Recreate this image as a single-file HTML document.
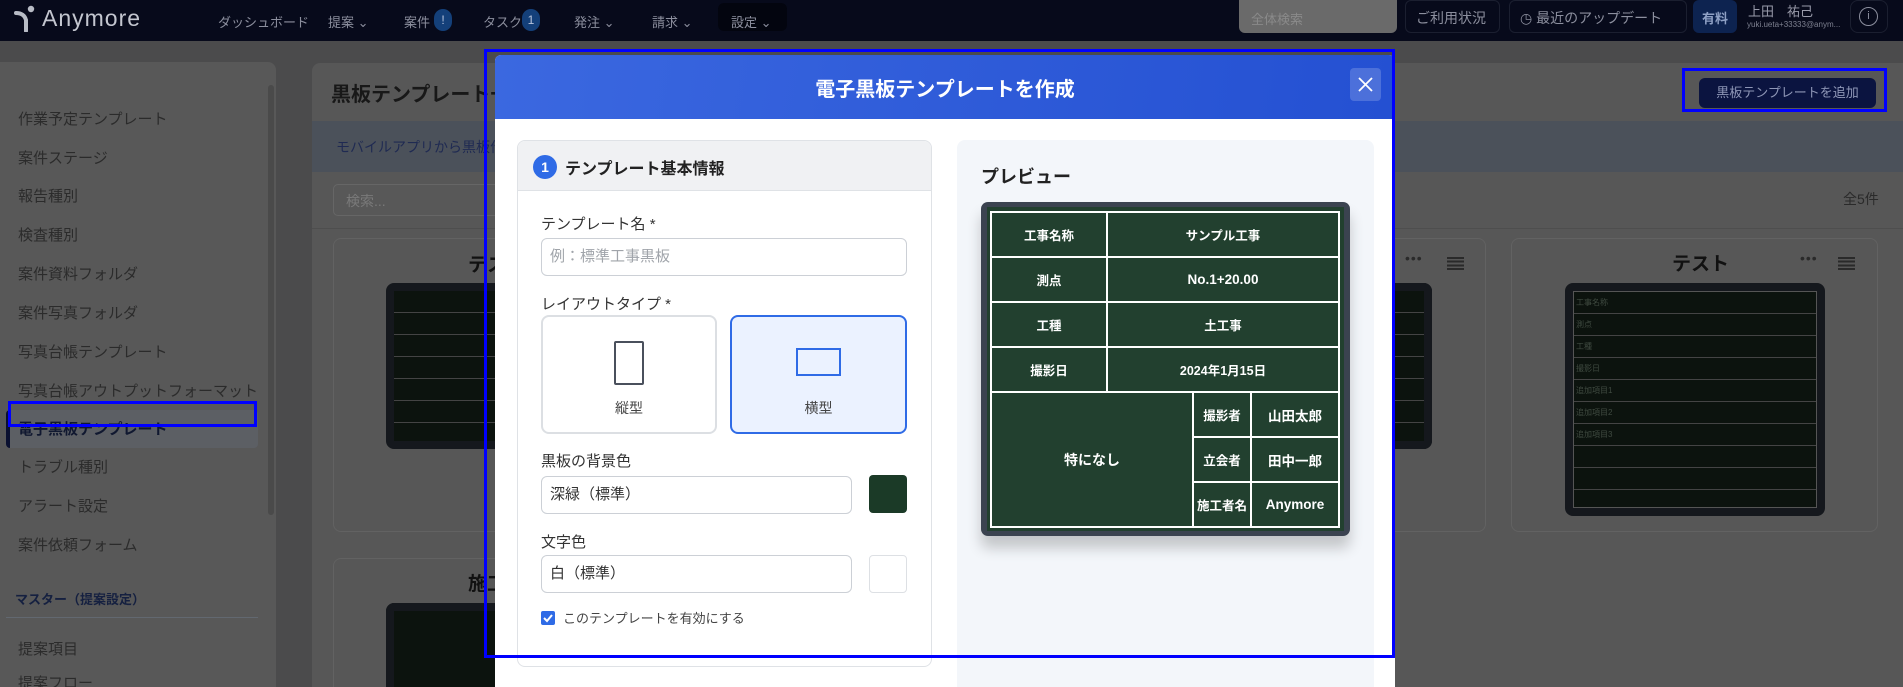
<!DOCTYPE html>
<html style="width:1903px;height:687px;overflow:hidden;background:#4b4b4c"><head><meta charset="utf-8">
<style>
*{margin:0;padding:0;box-sizing:border-box;white-space:nowrap}
body{width:1903px;height:687px;overflow:hidden;background:#4b4b4c;font-family:"Liberation Sans","Noto Sans CJK JP",sans-serif;position:relative}
.a{position:absolute}
.nav{left:0;top:0;width:1903px;height:41px;background:#070a1b}
.nv{color:#8c8f9e;font-size:13px;top:12px}
.badge{background:#14407a;color:#b8c4dc;border-radius:10px;font-size:12px;text-align:center;height:22px;line-height:22px;top:9px;width:18px}
.side{left:0;top:62px;width:276px;height:625px;background:#585858;border-radius:0 8px 0 0}
.si{left:18px;font-size:15px;color:#2b2b2b}
.main{left:312px;top:63px;width:1591px;height:624px;background:#575757;border-radius:8px 0 0 0}
.bb{background:#0c130e;border:8px solid #15181d;border-radius:8px}
.grid{background:repeating-linear-gradient(to bottom,transparent 0,transparent 21px,#444 21px,#444 22px),#0c130e}
.box{border:3px solid #0000ff}
.modal{left:495px;top:55px;width:900px;height:632px;background:#fff;border-radius:6px 6px 0 0;overflow:hidden}
.mh{left:0;top:0;width:900px;height:64px;background:linear-gradient(100deg,#3b68e0,#2450d2)}
.lbl{font-size:15px;color:#333}
.inp{border:1px solid #ccd0d6;border-radius:6px;height:38px;font-size:15px;line-height:36px;padding-left:8px;color:#333;background:#fff}
table.bd{border-collapse:collapse;width:350px}
table.bd td{border:2px solid #fff;color:#fff;font-weight:bold;font-size:12.5px;text-align:center;height:45px;padding:0}
.ham{width:17px;height:13px;background:repeating-linear-gradient(to bottom,#2a2a2a 0,#2a2a2a 2px,transparent 2px,transparent 3.7px)}
</style></head><body>

<div class="a nav"></div>
<svg class="a" style="left:12px;top:4px" width="26" height="28" viewBox="0 0 26 28"><circle cx="19" cy="5" r="3.2" fill="#b8bcc6"/><path d="M4 9 Q12 9 14 16 L14 27" stroke="#b8bcc6" stroke-width="4" fill="none" stroke-linecap="round"/></svg>
<div class="a" style="left:42px;top:5px;font-size:23px;color:#c3c6cf;letter-spacing:1px">Anymore</div>
<div class="a nv" style="left:218px">ダッシュボード</div>
<div class="a nv" style="left:328px">提案 ⌄</div>
<div class="a nv" style="left:404px">案件</div><div class="a badge" style="left:434px">!</div>
<div class="a nv" style="left:483px">タスク</div><div class="a badge" style="left:522px">1</div>
<div class="a nv" style="left:574px">発注 ⌄</div>
<div class="a nv" style="left:652px">請求 ⌄</div>
<div class="a" style="left:718px;top:3px;width:69px;height:28px;background:#03050f;border-radius:6px"></div>
<div class="a nv" style="left:731px">設定 ⌄</div>
<div class="a" style="left:1239px;top:0;width:158px;height:33px;background:#6a6a6a;border-radius:0 0 6px 6px;color:#8a8a8a;font-size:13px;padding:9px 12px">全体検索</div>
<div class="a" style="left:1405px;top:0;width:95px;height:33px;border:1px solid #1b1f30;border-radius:6px;color:#8c8f9e;font-size:14px;padding:7px 10px">ご利用状況</div>
<div class="a" style="left:1509px;top:0;width:178px;height:33px;border:1px solid #1b1f30;border-radius:6px;color:#8c8f9e;font-size:14px;padding:7px 10px">◷ 最近のアップデート</div>
<div class="a" style="left:1693px;top:0;width:44px;height:33px;background:#0d2350;border-radius:6px;color:#8ea0c4;font-size:13px;font-weight:bold;padding:8px 9px">有料</div>
<div class="a" style="left:1748px;top:1px;color:#9a9cab;font-size:13px">上田　祐己</div>
<div class="a" style="left:1747px;top:20px;color:#7d8090;font-size:8px">yuki.ueta+33333@anym...</div>
<div class="a" style="left:1850px;top:0;width:38px;height:33px;border:1px solid #1b1f30;border-radius:8px"></div>
<div class="a" style="left:1859px;top:7px;width:19px;height:19px;border:1.5px solid #8c8f9e;border-radius:50%;color:#8c8f9e;font-size:11px;text-align:center;line-height:16px">i</div>

<div class="a side"></div>
<div class="a" style="left:268px;top:85px;width:6px;height:430px;background:#4a4a4a;border-radius:3px"></div>
<div class="a si" style="top:108px">作業予定テンプレート</div>
<div class="a si" style="top:147px">案件ステージ</div>
<div class="a si" style="top:185px">報告種別</div>
<div class="a si" style="top:224px">検査種別</div>
<div class="a si" style="top:263px">案件資料フォルダ</div>
<div class="a si" style="top:302px">案件写真フォルダ</div>
<div class="a si" style="top:341px">写真台帳テンプレート</div>
<div class="a si" style="top:380px">写真台帳アウトプットフォーマット</div>
<div class="a" style="left:6px;top:410px;width:252px;height:38px;background:#5c5f64;border-radius:4px;border-left:4px solid #0a1030"></div>
<div class="a si" style="top:418px;font-weight:bold;color:#101830">電子黒板テンプレート</div>
<div class="a si" style="top:456px">トラブル種別</div>
<div class="a si" style="top:495px">アラート設定</div>
<div class="a si" style="top:534px">案件依頼フォーム</div>
<div class="a" style="left:15px;top:589px;font-size:13px;font-weight:bold;color:#152040">マスター（提案設定）</div>
<div class="a" style="left:6px;top:617px;width:252px;height:1px;background:#626870"></div>
<div class="a si" style="top:638px">提案項目</div>
<div class="a si" style="top:672px">提案フロー</div>
<div class="a box" style="left:8px;top:401px;width:249px;height:26px"></div>

<div class="a main"></div>
<div class="a" style="left:331px;top:78px;font-size:20px;font-weight:bold;color:#181818">黒板テンプレート一覧</div>
<div class="a" style="left:312px;top:121px;width:1591px;height:51px;background:#4b515a"></div>
<div class="a" style="left:336px;top:137px;font-size:14px;color:#1f2a52">モバイルアプリから黒板作成...</div>
<div class="a" style="left:333px;top:184px;width:300px;height:32px;border:1px solid #666;border-radius:5px;background:#585858;color:#7a7a7a;font-size:14px;padding:6px 12px">検索...</div>
<div class="a" style="left:312px;top:228px;width:1591px;height:1px;background:#4e4e4e"></div>
<div class="a" style="left:1843px;top:189px;font-size:14px;color:#2a2a2a">全5件</div>
<div class="a" style="left:1699px;top:78px;width:177px;height:30px;background:#0b1440;border-radius:6px;color:#8e96b6;font-size:13px;text-align:center;line-height:30px">黒板テンプレートを追加</div>
<div class="a box" style="left:1682px;top:68px;width:205px;height:44px"></div>

<div class="a" style="left:333px;top:238px;width:300px;height:294px;border:1px solid #626262;border-radius:8px"></div>
<div class="a" style="left:468px;top:250px;font-size:19px;font-weight:bold;color:#111">テスト</div>
<div class="a bb grid" style="left:386px;top:283px;width:120px;height:166px"></div>
<div class="a" style="left:333px;top:558px;width:300px;height:129px;border:1px solid #626262;border-bottom:none;border-radius:8px 8px 0 0"></div>
<div class="a" style="left:468px;top:569px;font-size:19px;font-weight:bold;color:#111">施工</div>
<div class="a bb" style="left:386px;top:603px;width:120px;height:84px;border-bottom:none;border-radius:8px 8px 0 0"></div>
<div class="a" style="left:1380px;top:238px;width:106px;height:294px;border:1px solid #626262;border-left:none;border-radius:0 8px 8px 0"></div>
<div class="a" style="left:1405px;top:250px;font-size:14px;color:#2a2a2a;letter-spacing:1px">•••</div>
<div class="a ham" style="left:1447px;top:257px"></div>
<div class="a bb grid" style="left:1380px;top:283px;width:52px;height:166px;border-left:none;border-radius:0 8px 8px 0"></div>
<div class="a" style="left:1511px;top:238px;width:367px;height:294px;border:1px solid #626262;border-radius:8px"></div>
<div class="a" style="left:1672px;top:249px;font-size:19px;font-weight:bold;color:#111">テスト</div>
<div class="a" style="left:1800px;top:250px;font-size:14px;color:#2a2a2a;letter-spacing:1px">•••</div>
<div class="a ham" style="left:1838px;top:257px"></div>
<div class="a bb" style="left:1565px;top:283px;width:260px;height:233px;color:#3f4a40;font-size:8px">
<div class="grid" style="border:1px solid #555;height:100%;font-size:8px;line-height:22px;padding-left:2px">工事名称<br>測点<br>工種<br>撮影日<br>追加項目1<br>追加項目2<br>追加項目3</div></div>

<div class="a modal">
 <div class="a mh"></div>
 <div class="a" style="left:0;top:18px;width:900px;text-align:center;color:#fff;font-size:20px;font-weight:bold">電子黒板テンプレートを作成</div>
 <div class="a" style="left:855px;top:13px;width:31px;height:33px;background:rgba(255,255,255,.18);border-radius:4px"></div>
 <svg class="a" style="left:862px;top:21px" width="17" height="17"><path d="M2 2L15 15M15 2L2 15" stroke="#fff" stroke-width="1.8"/></svg>

 <div class="a" style="left:22px;top:85px;width:415px;height:527px;border:1px solid #dfe2e6;border-radius:8px;overflow:hidden">
  <div class="a" style="left:0;top:0;width:415px;height:50px;background:#f0f1f3;border-bottom:1px solid #dfe2e6"></div>
  <div class="a" style="left:15px;top:14px;width:24px;height:24px;border-radius:50%;background:#2f6be6;color:#fff;font-size:14px;font-weight:bold;text-align:center;line-height:24px">1</div>
  <div class="a" style="left:47px;top:14px;font-size:16px;font-weight:bold;color:#222">テンプレート基本情報</div>
 </div>
 <div class="a lbl" style="left:46px;top:158px">テンプレート名 *</div>
 <div class="a inp" style="left:46px;top:183px;width:366px;color:#a0a4aa">例：標準工事黒板</div>
 <div class="a lbl" style="left:46px;top:238px">レイアウトタイプ *</div>
 <div class="a" style="left:46px;top:260px;width:176px;height:119px;border:2px solid #dcdfe3;border-radius:8px"></div>
 <div class="a" style="left:119px;top:286px;width:30px;height:44px;border:2px solid #4a505c;border-radius:2px"></div>
 <div class="a" style="left:46px;top:343px;width:176px;text-align:center;font-size:14px;color:#444">縦型</div>
 <div class="a" style="left:235px;top:260px;width:177px;height:119px;border:2px solid #2f6be6;border-radius:8px;background:#ebf2ff"></div>
 <div class="a" style="left:301px;top:293px;width:45px;height:28px;border:2px solid #2f6be6"></div>
 <div class="a" style="left:235px;top:343px;width:177px;text-align:center;font-size:14px;color:#444">横型</div>
 <div class="a lbl" style="left:46px;top:395px">黒板の背景色</div>
 <div class="a inp" style="left:46px;top:421px;width:311px">深緑（標準）</div>
 <div class="a" style="left:374px;top:420px;width:38px;height:38px;background:#1b3a27;border-radius:4px"></div>
 <div class="a lbl" style="left:46px;top:476px">文字色</div>
 <div class="a inp" style="left:46px;top:500px;width:311px">白（標準）</div>
 <div class="a" style="left:374px;top:500px;width:38px;height:38px;border:1px solid #dde0e4;border-radius:4px"></div>
 <div class="a" style="left:46px;top:556px;width:14px;height:14px;background:#2f6be6;border-radius:2px"></div>
 <svg class="a" style="left:47px;top:557px" width="12" height="12"><path d="M2 6L5 9L10 3" stroke="#fff" stroke-width="2" fill="none"/></svg>
 <div class="a" style="left:68px;top:553px;font-size:13px;color:#444">このテンプレートを有効にする</div>

 <div class="a" style="left:462px;top:85px;width:417px;height:547px;background:#f3f6fa;border-radius:8px 8px 0 0"></div>
 <div class="a" style="left:486px;top:108px;font-size:18px;font-weight:bold;color:#222">プレビュー</div>
 <div class="a" style="left:486px;top:147px;width:369px;height:334px;background:#3b4350;border-radius:7px;box-shadow:0 12px 14px rgba(0,0,0,.2)"></div>
 <div class="a" style="left:492px;top:152px;width:357px;height:324px;background:#22402f"></div>
 <div class="a" style="left:495px;top:156px;width:350px;height:316px">
  <table class="bd">
   <tr><td style="width:116px">工事名称</td><td colspan="3">サンプル工事</td></tr>
   <tr><td>測点</td><td colspan="3" style="font-size:13.5px">No.1+20.00</td></tr>
   <tr><td>工種</td><td colspan="3">土工事</td></tr>
   <tr><td>撮影日</td><td colspan="3">2024年1月15日</td></tr>
   <tr><td colspan="2" rowspan="3" style="font-size:14px">特になし</td><td style="width:58px">撮影者</td><td style="width:88px;font-size:13.5px">山田太郎</td></tr>
   <tr><td>立会者</td><td style="font-size:13.5px">田中一郎</td></tr>
   <tr><td>施工者名</td><td style="font-size:13.5px">Anymore</td></tr>
  </table>
 </div>
</div>
<div class="a box" style="left:484px;top:49px;width:911px;height:609px"></div>
</body></html>
